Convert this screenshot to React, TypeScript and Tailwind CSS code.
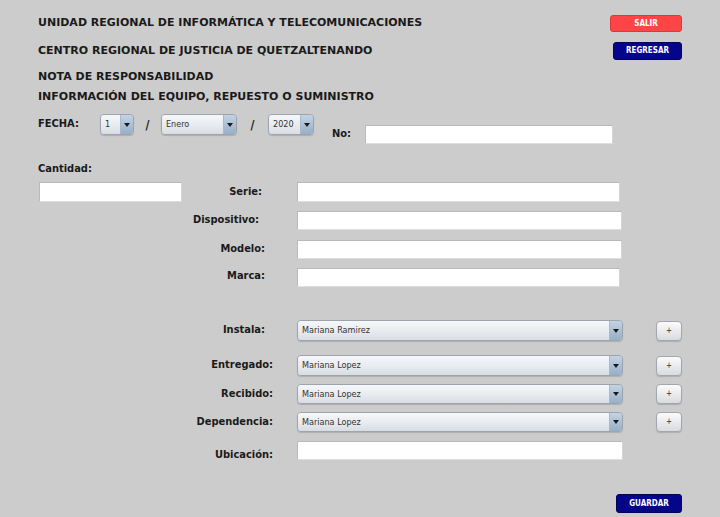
import React from "react";

const TextBox = ({ className }: { className: string }) => (
  <div
    className={`bg-white border border-[#b9b9b9] border-b-[#dedede] border-r-[#d4d4d4] ${className}`}
  />
);

const Arrow = () => (
  <div className="w-[13px] h-full flex items-center justify-center bg-gradient-to-b from-[#c3d3e4] to-[#97afc9] border-l border-[#aab8c8]">
    <svg width="6" height="4" viewBox="0 0 6 4">
      <path d="M0 0 L6 0 L3 4 Z" fill="#1a1a1a" />
    </svg>
  </div>
);

const Combo = ({ value, className }: { value: string; className: string }) => (
  <div
    className={`flex items-stretch rounded-[4px] border border-[#9ea4ad] overflow-hidden shadow-[0_1px_1px_rgba(0,0,0,0.15)] ${className}`}
  >
    <div className="flex-1 flex items-center pl-[4px] bg-gradient-to-b from-[#f6f7f9] via-[#e9ecf0] to-[#d9dde3] text-[9px] text-[#333] leading-none">
      {value}
    </div>
    <Arrow />
  </div>
);

const PlusButton = () => (
  <div className="w-[26px] h-[20px] rounded-[4px] border border-[#a3a6ab] bg-gradient-to-b from-[#fbfbfc] to-[#d9dbdf] shadow-[0_1px_1px_rgba(0,0,0,0.15)] flex items-center justify-center text-[8px] leading-none text-[#333]">
    +
  </div>
);

const Label = ({ text, pr }: { text: string; pr: string }) => (
  <div className={`w-[273px] text-right text-[11px] font-bold text-[#1a1a1a] ${pr}`}>
    {text}
  </div>
);

const heading = "text-[11px] font-bold font-['DejaVu_Sans',sans-serif] text-[#1a1a1a]";

const App = () => {
  return (
    <div
      className="w-[720px] h-[517px] bg-[#cccccc] px-[38px] text-[#1a1a1a] overflow-hidden"
      style={{ fontFamily: "'DejaVu Sans Condensed', 'DejaVu Sans', sans-serif" }}
    >
      {/* header */}
      <div className="flex items-center justify-between h-[17px] mt-[15px]">
        <div className={heading}>UNIDAD REGIONAL DE INFORMÁTICA Y TELECOMUNICACIONES</div>
        <div className="w-[72px] h-[17px] rounded-[3px] bg-[#fd4545] border border-[#d83a3a] text-white text-[8px] font-bold flex items-center justify-center">
          SALIR
        </div>
      </div>
      <div className="flex items-center justify-between h-[18px] mt-[10px]">
        <div className={heading}>CENTRO REGIONAL DE JUSTICIA DE QUETZALTENANDO</div>
        <div className="w-[69px] h-[18px] rounded-[3px] bg-[#05058c] border border-[#03035a] text-white text-[8px] font-bold flex items-center justify-center">
          REGRESAR
        </div>
      </div>
      <div className={`mt-[7px] leading-[20px] ${heading}`}>NOTA DE RESPONSABILIDAD</div>
      <div className={`leading-[20px] ${heading}`}>
        INFORMACIÓN DEL EQUIPO, REPUESTO O SUMINISTRO
      </div>

      {/* fecha */}
      <div className="flex items-start mt-[7px]">
        <div className="w-[62px] h-[21px] flex items-center text-[11px] font-bold">FECHA:</div>
        <Combo value="1" className="w-[34px] h-[21px]" />
        <div className="w-[27px] h-[21px] flex items-center justify-center text-[12px] font-bold">/</div>
        <Combo value="Enero" className="w-[76px] h-[21px]" />
        <div className="w-[31px] h-[21px] flex items-center justify-center text-[12px] font-bold">/</div>
        <Combo value="2020" className="w-[46px] h-[21px]" />
        <div className="ml-[18px] mt-[11px] w-[33px] h-[19px] flex items-center text-[11px] font-bold">No:</div>
        <TextBox className="mt-[11px] w-[248px] h-[19px]" />
      </div>

      {/* cantidad */}
      <div className="mt-[17px] text-[11px] font-bold leading-[16px]">Cantidad:</div>

      <div className="-ml-[38px]">
        <div className="flex items-center mt-[5px] h-[20px]">
          <TextBox className="ml-[39px] w-[143px] h-[20px]" />
          <div className="w-[80px] text-right text-[11px] font-bold">Serie:</div>
          <TextBox className="ml-[35px] w-[323px] h-[20px]" />
        </div>
        <div className="flex items-center mt-[9px] h-[19px]">
          <Label text="Dispositivo:" pr="pr-[14px]" />
          <TextBox className="ml-[24px] w-[325px] h-[19px]" />
        </div>
        <div className="flex items-center mt-[10px] h-[19px]">
          <Label text="Modelo:" pr="pr-[8px]" />
          <TextBox className="ml-[24px] w-[325px] h-[19px]" />
        </div>
        <div className="flex items-start mt-[9px] h-[19px]">
          <Label text="Marca:" pr="pr-[8px]" />
          <TextBox className="ml-[24px] w-[323px] h-[19px]" />
        </div>

        <div className="flex items-center mt-[33px] h-[21px]">
          <Label text="Instala:" pr="pr-[8px]" />
          <Combo value="Mariana Ramirez" className="ml-[24px] w-[326px] h-[21px]" />
          <div className="ml-[33px]"><PlusButton /></div>
        </div>
        <div className="flex items-center mt-[14px] h-[21px]">
          <Label text="Entregado:" pr="pr-0" />
          <Combo value="Mariana Lopez" className="ml-[24px] w-[326px] h-[21px]" />
          <div className="ml-[33px]"><PlusButton /></div>
        </div>
        <div className="flex items-center mt-[8px] h-[20px]">
          <Label text="Recibido:" pr="pr-0" />
          <Combo value="Mariana Lopez" className="ml-[24px] w-[326px] h-[20px]" />
          <div className="ml-[33px]"><PlusButton /></div>
        </div>
        <div className="flex items-center mt-[8px] h-[20px]">
          <Label text="Dependencia:" pr="pr-0" />
          <Combo value="Mariana Lopez" className="ml-[24px] w-[326px] h-[20px]" />
          <div className="ml-[33px]"><PlusButton /></div>
        </div>
        <div className="flex items-end mt-[9px] h-[22px]">
          <Label text="Ubicación:" pr="pr-0" />
          <TextBox className="ml-[24px] w-[326px] h-[19px] self-start" />
        </div>
      </div>

      <div className="flex justify-end mt-[31px]">
        <div className="w-[66px] h-[19px] rounded-[3px] bg-[#05058c] border border-[#03035a] text-white text-[8px] font-bold flex items-center justify-center">
          GUARDAR
        </div>
      </div>
    </div>
  );
};

export default App;
